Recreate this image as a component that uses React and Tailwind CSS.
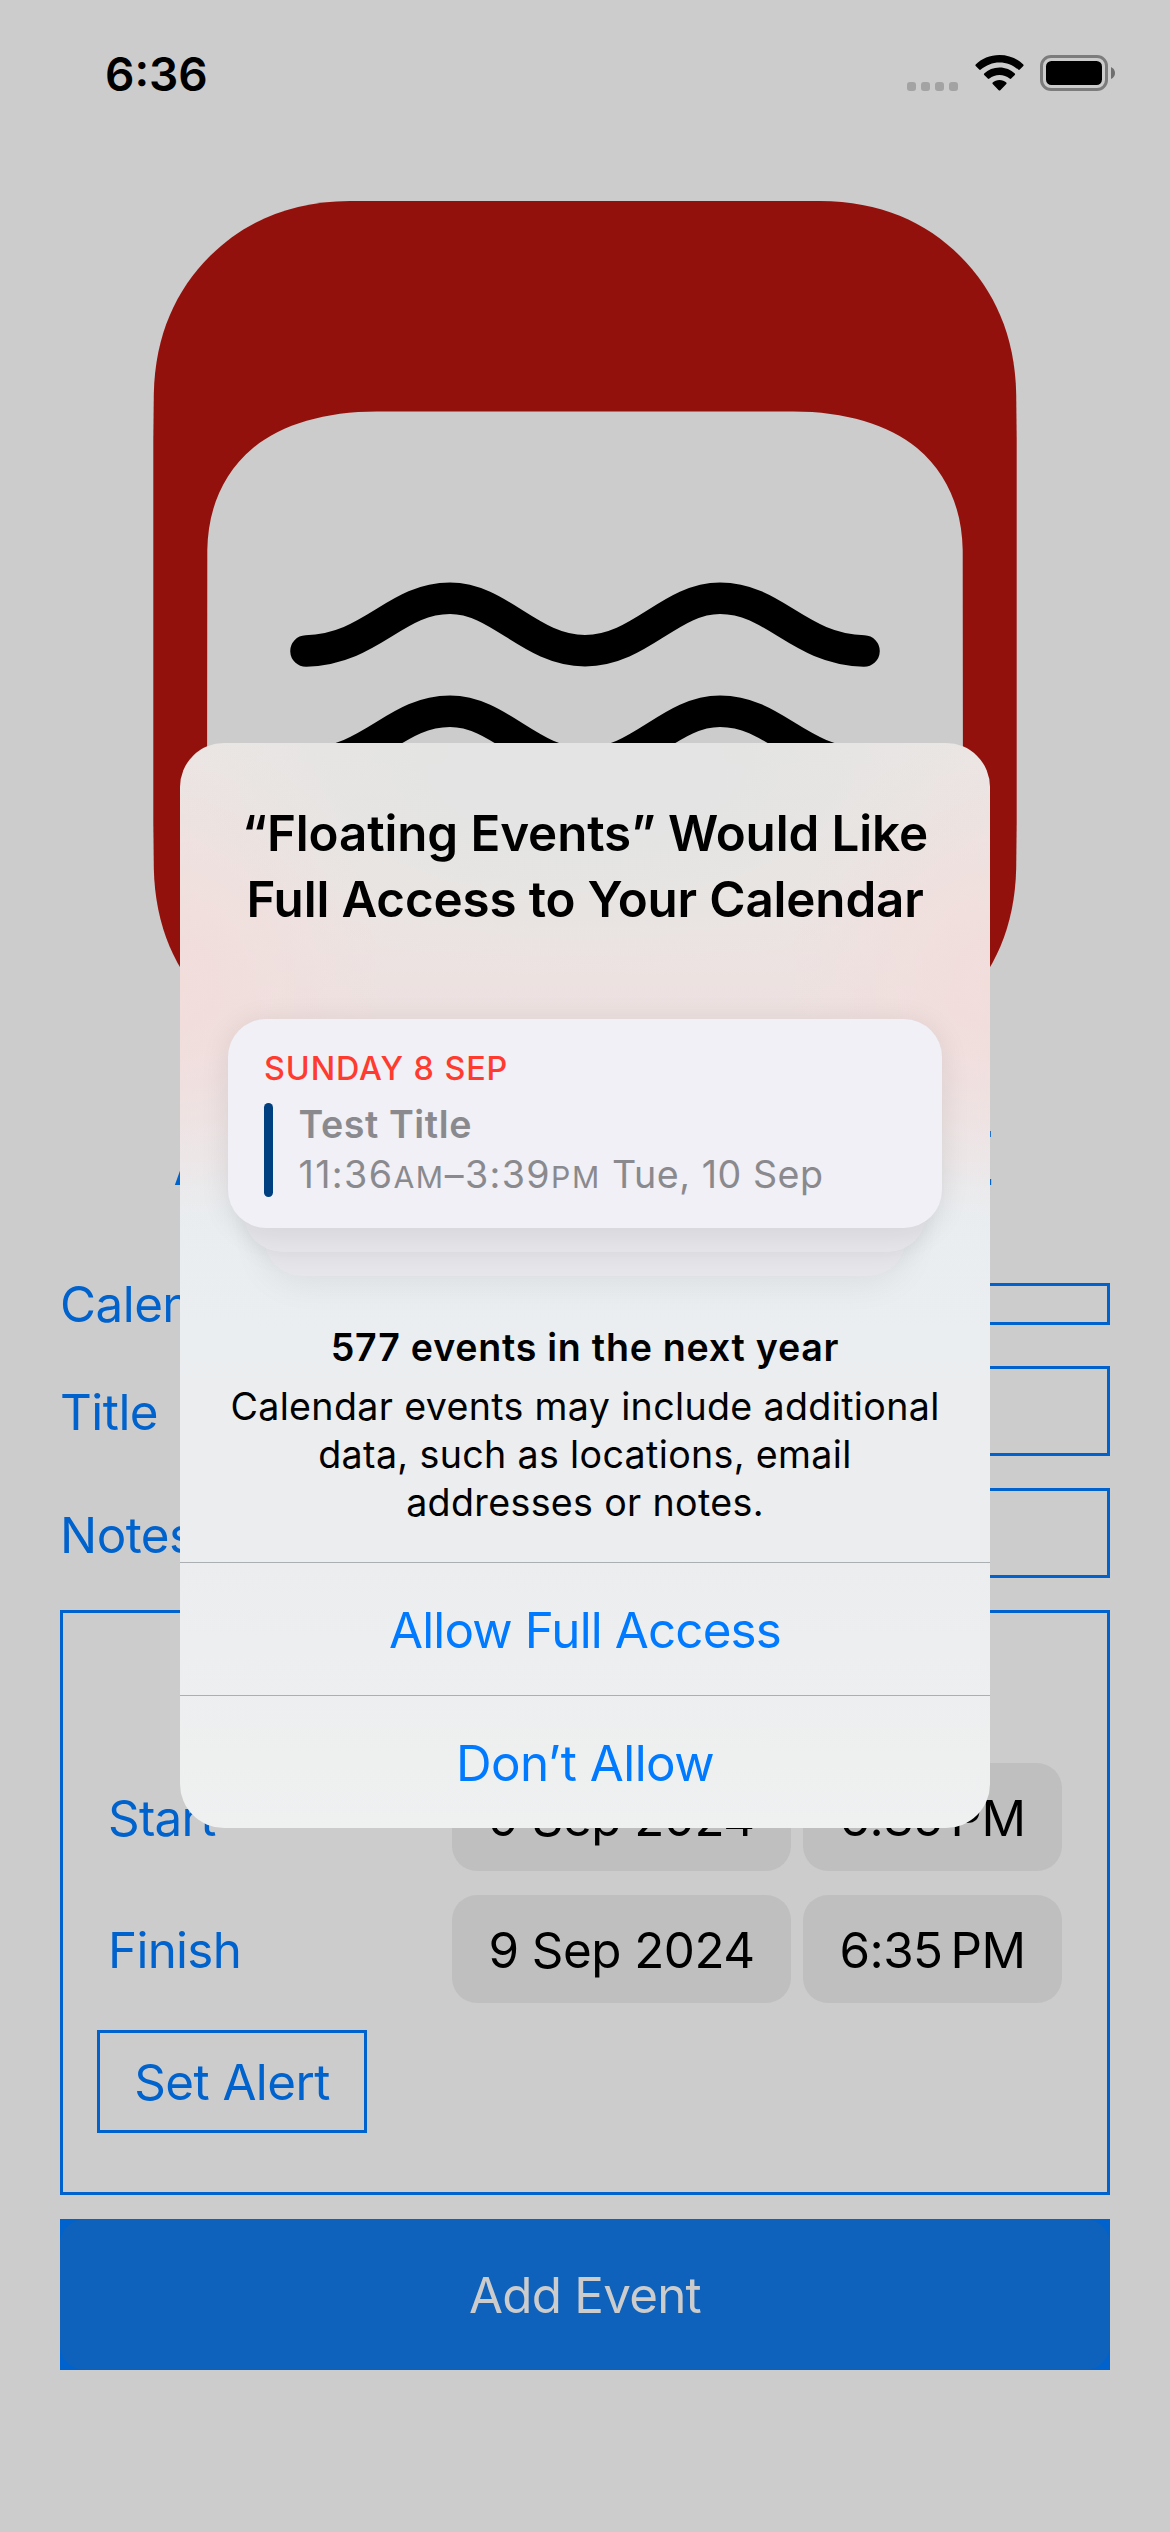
const LOGO_FRAME =
  "M153.300 440 L153.800 394 C155 335 176 290 210 256 C244 222 290 201.300 350 201 " +
  "L820 201 C880 201.300 926 222 960 256 C994 290 1015 335 1016.200 394 L1016.700 440 " +
  "L1016.700 822 L1016.200 868 C1015 927 994 972 960 1006 C926 1040 880 1060.700 820 1061 " +
  "L350 1061 C290 1060.700 244 1040 210 1006 C176 972 155 927 153.800 868 L153.300 822 Z";

const LOGO_PAGE =
  "M207 850 L207.300 550 C208 510 222 474 253 448 C281 424.500 325 411.400 377 411.400 " +
  "L793 411.400 C845 411.400 889 424.500 917 448 C948 474 962 510 962.700 550 L963 850 Z";

const WAVE =
  "M306 651 C372 649 395 598.3 450 598.3 C500 598.3 530 650.7 585 650.7 C640 650.7 670 598.3 720 598.3 C775 598.3 798 649 864 651";

function StatusBar() {
  return (
    <div className="flex h-[200px] items-start justify-between pl-[105px] pr-[54px] pt-[44px]">
      <div className="text-[46px] font-semibold leading-[60px] text-black">6:36</div>
      <div className="mt-[11px] flex h-[36px] items-end">
        <div className="mr-[17px] flex gap-[5px]">
          <span className="size-[9px] rounded-[3px] bg-[#a3a3a3]" />
          <span className="size-[9px] rounded-[3px] bg-[#a3a3a3]" />
          <span className="size-[9px] rounded-[3px] bg-[#a3a3a3]" />
          <span className="size-[9px] rounded-[3px] bg-[#a3a3a3]" />
        </div>
        <svg className="mr-[16px] h-[36px] w-[49px]" viewBox="0 0 49 36">
          <path d="M24.5 0 C34 0 42.500 3.700 48.300 9.500 Q49 10.300 48.300 11 L44.800 14.600 Q44 15.300 43.200 14.600 C38 10 31.500 7.400 24.500 7.400 C17.500 7.400 11 10 5.800 14.600 Q5 15.300 4.200 14.600 L0.700 11 Q0 10.300 0.700 9.500 C6.500 3.700 15 0 24.500 0 Z" />
          <path d="M24.500 12.500 C30.500 12.500 35.800 14.800 39.800 18.500 Q40.500 19.300 39.800 20 L36.200 23.600 Q35.400 24.300 34.600 23.600 C31.800 21.200 28.300 19.900 24.500 19.900 C20.700 19.900 17.200 21.200 14.400 23.600 Q13.600 24.300 12.800 23.600 L9.200 20 Q8.500 19.300 9.200 18.500 C13.200 14.800 18.500 12.500 24.500 12.500 Z" />
          <path d="M24.500 25 C27.200 25 29.600 25.900 31.300 27.600 Q32 28.300 31.300 29.100 L25.300 35.200 Q24.500 36 23.700 35.200 L17.700 29.100 Q17 28.300 17.700 27.600 C19.400 25.900 21.800 25 24.500 25 Z" />
        </svg>
        <svg className="h-[36px] w-[76px]" viewBox="0 0 76 36">
          <rect x="1.500" y="1.500" width="65" height="33" rx="9.500" fill="none" stroke="#7c7c7c" strokeWidth="3" />
          <rect x="6" y="6" width="56" height="24" rx="5.500" />
          <path d="M71 12 Q75 14 75 18 Q75 22 71 24 Z" fill="#6f6f6f" />
        </svg>
      </div>
    </div>
  );
}

function AppLogo() {
  return (
    <svg className="block h-[862px] w-[1170px]" viewBox="0 200 1170 862">
      <path d={LOGO_FRAME} fill="#93110c" />
      <path d={LOGO_PAGE} fill="#cccccc" />
      <g fill="none" stroke="#000" strokeWidth="31.500" strokeLinecap="round">
        <path d={WAVE} />
        <path d={WAVE} transform="translate(0 113)" />
      </g>
    </svg>
  );
}

function Field({ label, labelClass, height }) {
  return (
    <div className="flex items-center justify-between">
      <div className={"-my-4 text-[49.3px] leading-[60px] tracking-[-0.5px] " + labelClass}>{label}</div>
      <div className={"w-[700px] border-[3px] border-[#0062cc] " + height} />
    </div>
  );
}

function DateRow({ label, date, time }) {
  return (
    <div className="flex h-[108px] items-center">
      <div className="flex-1 pt-[1px] text-[49.3px] leading-[60px] tracking-[-0.7px]">{label}</div>
      <div className="flex h-full gap-3 text-[49.3px] leading-[60px] text-black">
        <div className="flex w-[339px] items-center justify-center rounded-[25px] bg-[#bfbfbf] pt-[2px] tracking-[-0.5px]">{date}</div>
        <div className="flex w-[259px] items-center justify-center gap-[8px] rounded-[25px] bg-[#bfbfbf] pt-[2px] tracking-[-0.5px]">
          <span>{time}</span>
          <span>PM</span>
        </div>
      </div>
    </div>
  );
}

function EventForm() {
  return (
    <div className="px-[60px] text-[#0062cc]">
      <div className="ml-[113px] mr-[116px] mt-[47px] flex h-[100px] justify-between text-[73.6px] leading-[100px]">
        <span>A</span>
        <span className="-mr-[2px]">E</span>
      </div>
      <div className="mt-[74px] flex flex-col">
        <Field label="Calendar" labelClass="pt-0" height="h-[42px]" />
        <div className="h-[41px]" />
        <Field label="Title" labelClass="pt-[2px]" height="h-[90px]" />
        <div className="h-8" />
        <Field label="Notes" labelClass="pt-[3px]" height="h-[90px]" />
      </div>
      <div className="mt-8 flex h-[585px] flex-col border-[3px] border-[#0062cc] pl-[45px] pr-[45px] pt-[150px]">
        <DateRow label="Start" date="9 Sep 2024" time="6:35" />
        <div className="h-6" />
        <DateRow label="Finish" date="9 Sep 2024" time="6:35" />
        <div className="-ml-[11px] mt-[27px] flex h-[103px] w-[270px] items-center justify-center border-[3px] border-[#0062cc] pt-[1px] text-[49.3px] leading-[60px] tracking-[-0.55px]">
          Set Alert
        </div>
      </div>
      <div className="mt-6 h-[151px] bg-[#0062cc]">
        <div className="flex h-full items-center justify-center rounded-[25px] bg-[#0f62bc] text-[49.3px] leading-[60px] tracking-[-0.75px] text-[#cccccc]">
          Add Event
        </div>
      </div>
    </div>
  );
}

function EventCard() {
  return (
    <div className="relative mx-auto h-[209px] w-[714px]">
      <div className="absolute left-[36px] top-[60px] h-[197px] w-[642px] rounded-[38px] bg-[#e6e6eb] shadow-[0_6px_36px_rgba(0,0,0,0.07)]" />
      <div className="absolute left-[16px] top-[40px] h-[193px] w-[682px] rounded-[38px] bg-[#e6e5ea] shadow-[0_4px_24px_rgba(0,0,0,0.06)]" />
      <div className="relative h-full rounded-[38px] bg-[#f0f0f6] pl-[36px] pt-[30px] shadow-[0_4px_30px_rgba(0,0,0,0.09)]">
        <div className="text-[32.3px] font-medium leading-[40px] tracking-[0.95px] text-[#ff3b30]">SUNDAY 8 SEP</div>
        <div className="mt-[14px] flex">
          <div className="h-[94px] w-[9px] rounded-full bg-[#004080]" />
          <div className="ml-[25.5px] whitespace-nowrap text-[37.6px] leading-[50px] text-[#8a8a8e]">
            <div className="-mt-[3px] font-semibold tracking-[0.6px]">Test Title</div>
            <div className="tracking-[1.4px]">
              11:36<span className="text-[30.2px] tracking-[1.6px]">AM</span>–3:39
              <span className="text-[30.2px] tracking-[1.6px]">PM</span>
              <span className="tracking-[0.55px]"> Tue, 10 Sep</span>
            </div>
          </div>
        </div>
      </div>
    </div>
  );
}

function PermissionAlert() {
  return (
    <div className="absolute left-[180px] top-[743px] h-[1085px] w-[810px] overflow-hidden rounded-[44px] bg-[radial-gradient(ellipse_420px_210px_at_50%_2%,#e3e4e3_30%,transparent_100%),radial-gradient(ellipse_200px_250px_at_0%_22%,#f2dddb_0%,transparent_100%),radial-gradient(ellipse_200px_250px_at_100%_22%,#f2dddb_0%,transparent_100%),linear-gradient(180deg,#ebe6e4_0%,#ece4e2_16%,#ede1e0_25%,#ece5e6_31%,#e9edf0_42%,#ebeef0_55%,#ebedef_75%,#eff0f0_100%)]">
      <div className="h-[819px] text-center text-black">
        <div className="pt-[57px] text-[49.3px] font-semibold leading-[66px]">
          <div className="tracking-[-0.1px]">“Floating Events” Would Like</div>
          <div className="tracking-[-0.15px]">Full Access to Your Calendar</div>
        </div>
        <div className="mt-[87px] text-left">
          <EventCard />
        </div>
        <div className="mt-[95px] pt-[1px] text-[37.6px] font-semibold leading-[48px] tracking-[0.75px]">577 events in the next year</div>
        <div className="mt-[11px] whitespace-nowrap text-[37.6px] leading-[48px] tracking-[0.35px]">
          <div>Calendar events may include additional</div>
          <div>data, such as locations, email</div>
          <div>addresses or notes.</div>
        </div>
      </div>
      <div className="flex h-[133px] items-center justify-center border-t border-[#acafb2] pt-[1px] text-[49.3px] leading-[60px] tracking-[-0.85px] text-[#007aff]">
        Allow Full Access
      </div>
      <div className="flex h-[133px] items-center justify-center border-t border-[#acafb2] pt-[1px] text-[49.3px] leading-[60px] tracking-[-0.5px] text-[#007aff]">
        Don’t Allow
      </div>
    </div>
  );
}

export default function App() {
  return (
    <div className="relative h-[2532px] w-[1170px] overflow-hidden bg-[#cccccc] font-['Inter',sans-serif]">
      <StatusBar />
      <AppLogo />
      <EventForm />
      <PermissionAlert />
    </div>
  );
}
